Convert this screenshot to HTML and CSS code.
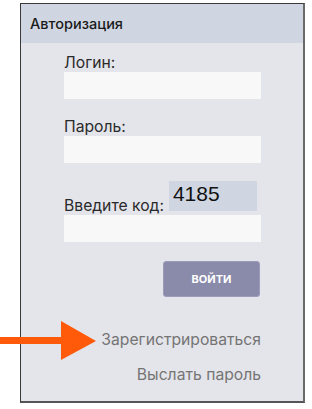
FILE: index.html
```html
<!DOCTYPE html>
<html>
<head>
    <title>Авторизация</title>
    <link rel="stylesheet" href="styles.css">
</head>
<body>
    <div class="panel">
        <div class="panel-title">Авторизация</div>

        <form class="login-form">
            <label class="field-label" for="login">Логин:</label>
            <input class="field-input" type="text" id="login">

            <label class="field-label gap" for="password">Пароль:</label>
            <input class="field-input" type="password" id="password">

            <div class="captcha-row">
                <label class="field-label" for="code">Введите код:</label>
                <span class="captcha">4185</span>
            </div>
            <input class="field-input" type="text" id="code">

            <div class="actions">
                <button class="btn-submit" type="button">Войти</button>
            </div>
        </form>

        <div class="links">
            <a class="link" href="#">Зарегистрироваться</a>
            <a class="link" href="#">Выслать пароль</a>
        </div>
    </div>

    <!-- pointer over the register link -->
    <svg class="pointer" width="100" height="42" viewBox="0 0 100 42">
        <rect x="0" y="17" width="64" height="7" fill="#ff5a0a"/>
        <polygon points="61,1 96,21 61,40" fill="#ff5a0a"/>
    </svg>
</body>
</html>
```

FILE: styles.css
```css
* {
    margin: 0;
    padding: 0;
    box-sizing: border-box;
}

body {
    font-family: Inter, Roboto, sans-serif;
    background: #fff;
    color: #222;
    position: relative;
}

.panel {
    margin: 3px 0 0 20px;
    width: 285px;
    height: 400px;
    background: #e4e5ea;
    border: 1px solid #3a3a3a;
    border-right: 2px solid #6a6a6a;
    border-bottom: 2px solid #555;
}

.panel-title {
    height: 39px;
    line-height: 39px;
    padding-left: 9px;
    background: #cfd6e2;
    font-size: 14.5px;
    font-weight: 500;
    color: #1a1a1a;
}

.login-form {
    display: flex;
    flex-direction: column;
    width: 197px;
    margin: 11px 0 0 43px;
}

.field-label {
    display: block;
    font-size: 15.7px;
    line-height: 18px;
    color: #2a2a2a;
}

.field-label.gap {
    margin-top: 19px;
}

.field-input {
    display: block;
    width: 197px;
    height: 27px;
    border: none;
    background: #f8f8f8;
    outline: none;
}

.captcha-row {
    display: flex;
    align-items: flex-end;
    margin-top: 18px;
    margin-bottom: 4px;
}

.captcha-row .field-label {
    margin-bottom: -4px;
}

.captcha {
    width: 88px;
    height: 30px;
    margin-left: 5px;
    padding-left: 4px;
    background: #cfd6e2;
    font-family: 'Liberation Sans', Arial, sans-serif;
    font-size: 21px;
    line-height: 26px;
    color: #111;
}

.actions {
    display: flex;
    justify-content: flex-end;
    margin-top: 19px;
    padding-right: 1px;
}

.btn-submit {
    width: 97px;
    height: 36px;
    border: 1px solid #9c9cb8;
    border-radius: 3px;
    background: #8a8aab;
    color: #fff;
    font-family: Inter, sans-serif;
    font-size: 11px;
    font-weight: 700;
    text-transform: uppercase;
}

.links {
    display: flex;
    flex-direction: column;
    align-items: flex-end;
    gap: 17px;
    width: 240px;
    margin-top: 34px;
}

.link {
    font-size: 15.7px;
    line-height: 18px;
    color: #747474;
    text-decoration: none;
}

.pointer {
    position: absolute;
    left: 0;
    top: 320px;
}
```
